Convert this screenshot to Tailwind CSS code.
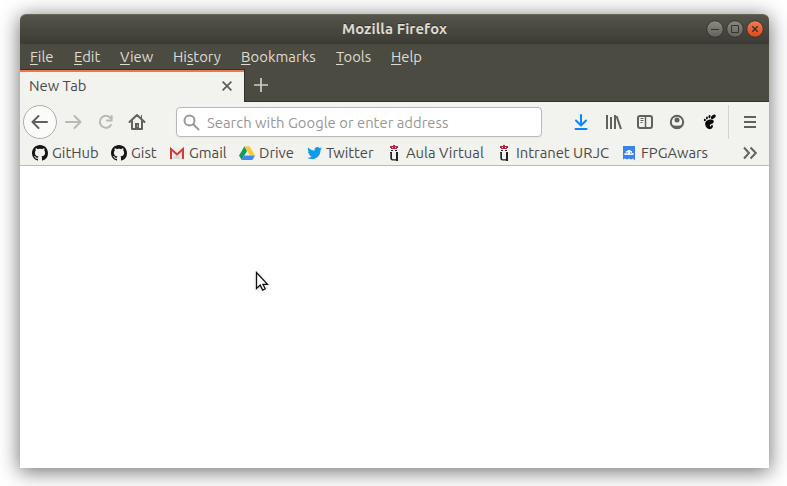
<!DOCTYPE html>
<html lang="en">
<head>
<meta charset="utf-8">
<title>Mozilla Firefox</title>
<script src="https://cdn.jsdelivr.net/npm/@tailwindcss/browser@4"></script>
</head>
<body class="w-[787px] h-[486px] overflow-hidden bg-white pt-[14px] pl-5 font-['Ubuntu','Noto_Sans',sans-serif] text-[14.8px] leading-5 text-[#4a4a4b]">
<svg class="hidden">
  <symbol id="github" viewBox="0 0 16 16"><path fill="#161514" d="M8 0C3.58 0 0 3.58 0 8c0 3.54 2.29 6.53 5.47 7.59.4.07.55-.17.55-.38 0-.19-.01-.82-.01-1.49-2.01.37-2.53-.49-2.69-.94-.09-.23-.48-.94-.82-1.13-.28-.15-.68-.52-.01-.53.63-.01 1.08.58 1.23.82.72 1.21 1.87.87 2.33.66.07-.52.28-.87.51-1.07-1.78-.2-3.64-.89-3.64-3.95 0-.87.31-1.59.82-2.15-.08-.2-.36-1.02.08-2.12 0 0 .67-.21 2.2.82.64-.18 1.32-.27 2-.27s1.36.09 2 .27c1.53-1.04 2.2-.82 2.2-.82.44 1.1.16 1.92.08 2.12.51.56.82 1.27.82 2.15 0 3.07-1.87 3.75-3.65 3.95.29.25.54.73.54 1.48 0 1.07-.01 1.93-.01 2.2 0 .21.15.46.55.38A8.01 8.01 0 0 0 16 8c0-4.42-3.58-8-8-8z"/></symbol>
  <symbol id="urjc" viewBox="0 0 16 16">
    <path fill="#bd2144" d="M7 0h2v1h3v2h-1v1H5V3H4V1h3z"/><path fill="#f1d5da" d="M6 2h1v1H6zM9 2h1v1H9z"/>
    <path fill="#252326" d="M5 5h2v1H5zM9 5h2v1H9zM4 7h2v6q0 1.300 1 1.300h3V7h2v9h-2v-.5H6.500Q4.300 15.500 4.300 13V8H4z"/>
  </symbol>
</svg>
<div class="w-[749px] h-[454px] bg-white rounded-t-[6px] shadow-[0_3px_20px_1px_rgba(0,0,0,0.55)] flex flex-col">
  <header class="relative h-[30px] shrink-0 rounded-t-[6px] border-t border-[#69675b] bg-linear-to-b from-[#56554b] to-[#3c3b35] flex items-center justify-center text-[#dfdbd2] font-bold">
    <span class="relative -top-px whitespace-nowrap tracking-[0.1px] [text-shadow:0_-1px_0_#32312b]">Mozilla Firefox</span>
    <svg class="absolute right-[4px] top-[4px]" width="60" height="20" viewBox="0 0 60 20" fill="none">
      <defs><linearGradient id="g" x2="0" y2="1"><stop stop-color="#8b8a82"/><stop offset="1" stop-color="#64635b"/></linearGradient><linearGradient id="r" x2="0" y2="1"><stop stop-color="#f37b57"/><stop offset="1" stop-color="#dd4818"/></linearGradient></defs>
      <g stroke="#34332e"><circle cx="10" cy="10" r="8.300" fill="url(#g)"/><circle cx="30" cy="10" r="8.300" fill="url(#g)"/><circle cx="50" cy="10" r="8.300" fill="url(#r)"/>
      <path d="M6 10.500h8M26.500 6.500h7v7h-7z"/><path stroke-width="1.400" d="m47.300 7.300 5.400 5.400m0-5.400-5.400 5.400"/></g>
    </svg>
  </header>
  <nav class="h-[25px] shrink-0 bg-[#4c4b42] pl-[10px] pt-[3px] flex gap-5 text-[#dfdbd2] whitespace-nowrap [&_u]:underline-offset-[2px] [&_u]:decoration-1">
    <span class="w-6"><u>F</u>ile</span><span class="w-[26px]"><u>E</u>dit</span><span class="w-[33px]"><u>V</u>iew</span><span class="w-12">Hi<u>s</u>tory</span><span class="w-[75px] tracking-[0.08px]"><u>B</u>ookmarks</span><span class="w-[35px]"><u>T</u>ools</span><span class="w-[31px]"><u>H</u>elp</span>
  </nav>
  <div class="h-[33px] shrink-0 bg-[#4c4b42] flex">
    <div class="w-[225px] border-t border-r border-[#32312b]">
      <div class="h-8 border-t-2 border-[#ef7847] bg-[#f2f2ee] flex items-center justify-between pl-[9px] pr-3">
        <span class="-mt-[2px]">New Tab</span>
        <svg class="-mt-[2px]" width="10" height="10" fill="none" stroke="#5b5b59" stroke-width="1.700"><path d="m.6.6 8.800 8.800m0-8.800L.6 9.400"/></svg>
      </div>
    </div>
    <div class="flex-1 border-b border-[#32312b] pl-[9px] pt-[9px]"><svg width="14" height="14" fill="none" stroke="#d0cdc4" stroke-width="1.700"><path d="M7 0v14M0 7h14"/></svg></div>
  </div>
  <div class="h-[40px] shrink-0 bg-[#f2f2ee] flex items-center">
    <svg width="140" height="40" viewBox="0 0 140 40" fill="none" stroke-width="2" stroke-linecap="round" stroke-linejoin="round">
      <circle cx="20" cy="20" r="16.500" fill="#fbfbfa" stroke="#adada9" stroke-width="1"/>
      <path stroke="#60605e" d="M13 20h14M18.500 14l-6 6 6 6"/>
      <path stroke="#b8b8b4" d="M46 20h14M54.500 14l6 6-6 6"/>
      <path stroke="#b8b8b4" d="M90.500 16a6 6 0 1 0 .5 7M91.700 14v4.500H87"/>
      <path stroke="#60605e" d="m109.500 20 7.500-7 7.500 7M112 19v8h10v-8"/><path fill="#60605e" d="M115 21h4v6h-4zM121 13v4l1 1v-5z" stroke="none"/><path fill="#f2f2ee" d="M117 23.500h1v1h-1z"/>
    </svg>
    <div class="ml-4 w-[366px] h-[30px] rounded-[4px] border border-[#b9b9b6] bg-white shadow-xs flex items-center pl-[6px] text-[#969696] whitespace-nowrap">
      <svg width="17" height="17" class="mr-[7px]" fill="none" stroke="#999998" stroke-width="2" stroke-linecap="round"><circle cx="6.500" cy="6.500" r="5"/><path d="m10.500 10.500 5 5"/></svg>
      <span class="mt-px tracking-[0.03px]">Search with Google or enter address</span>
    </div>
    <svg class="ml-[28px]" width="199" height="40" viewBox="550 0 199 40" fill="none" stroke="#60605e" stroke-width="2">
      <g stroke="#0a84ff" stroke-linecap="round" stroke-linejoin="round"><path d="M561 13v10M556 18.500l5 5 5-5M555.500 27h11"/></g>
      <path d="M587 13v14M591 15v12M595 13v14"/><path d="m596.500 14 4.500 13"/>
      <rect x="618" y="14" width="14" height="12" rx="2"/><path stroke-width="1.500" d="M625.500 14v12"/><path stroke-width="1" d="M620.500 16.500h3M620.500 18.500h3M620.500 20.500h2"/>
      <circle cx="657" cy="20" r="6.200"/><circle cx="657" cy="18" r="2.500" fill="#60605e" stroke="none"/><path stroke="none" fill="#60605e" d="M651.500 23q5.500 1.500 11 0-.5 4-5.500 4t-5.500-4z"/>
      <g transform="translate(103 0) scale(.85 1)" fill="#080808" stroke="none"><ellipse cx="694.500" cy="14.800" rx="3.200" ry="1.700" transform="rotate(-30 694.500 14.800)"/><ellipse cx="690" cy="14.600" rx="1.200" ry="1.600" transform="rotate(15 690 14.600)"/><ellipse cx="687" cy="16" rx="1.100" ry="1.400"/><ellipse cx="684.500" cy="18" rx="1.200" ry="1.200"/><path d="M692 17.500c-4 0-7.800 1.700-7 5.200.5 2.500 3 4.700 5.500 4.400 2.700-.2 3.700-2 3.400-3.700-.5-1.500-2-.5-2 .5 0 .8-1.500.8-1.500-.3.200-1.800 4.600-1.500 4.700-4 0-1.500-1.700-2.100-3.100-2.100z"/></g>
      <path stroke="#d2d2ce" stroke-width="1" d="M708.500 3v34"/>
      <path d="M724 15h12M724 20h12M724 25h12"/>
    </svg>
  </div>
  <div class="h-[24px] shrink-0 bg-[#f2f2ee] border-b border-[#bbbbb8] pl-3 pr-[11px] flex items-center gap-3 whitespace-nowrap [&>div]:flex [&>div]:items-center [&>div]:gap-1 [&_svg]:shrink-0 pb-[2px]">
    <div class="w-[67px]"><svg width="16" height="16"><use href="#github"/></svg><span>GitHub</span></div>
    <div class="w-[46px]"><svg width="16" height="16"><use href="#github"/></svg><span>Gist</span></div>
    <div class="w-[58px]"><svg width="16" height="16"><path fill="#ececec" d="M1 3h14v11H1z"/><path fill="#d9d9d9" d="m3 14 5-5 5 5z"/><path fill="none" stroke="#d43b2f" stroke-width="2" d="M2 14V4l6 5.500L14 4v10"/></svg><span>Gmail</span></div>
    <div class="w-[55px]"><svg width="16" height="16"><path fill="#159b5b" d="M5.500 1.300 0 10.500l2.700 4.500L8 6z"/><path fill="#f6cc36" d="M5.500 1.300h5L16 10.300h-5.300z"/><path fill="#4285f4" d="M5.300 10.500H16L13.300 15H2.700z"/></svg><span>Drive</span></div>
    <div class="w-[68px]"><svg width="16" height="16" viewBox="-2 -1 26 26"><path fill="#0c9bea" d="M23.950 4.570a10 10 0 0 1-2.820.770 4.960 4.960 0 0 0 2.160-2.720c-.95.550-2 .950-3.120 1.180a4.920 4.920 0 0 0-8.380 4.480C7.690 8.090 4.070 6.130 1.640 3.160a4.820 4.820 0 0 0-.67 2.480c0 1.700.87 3.210 2.190 4.100a4.900 4.900 0 0 1-2.230-.62v.06a4.920 4.920 0 0 0 3.950 4.830 5 5 0 0 1-2.210.080 4.940 4.940 0 0 0 4.600 3.420A9.870 9.870 0 0 1 0 19.540a13.990 13.990 0 0 0 7.550 2.210c9.050 0 14-7.500 14-13.980 0-.21 0-.42-.02-.63a9.940 9.940 0 0 0 2.460-2.550z"/></svg><span>Twitter</span></div>
    <div class="w-[98px]"><svg width="16" height="16"><use href="#urjc"/></svg><span>Aula Virtual</span></div>
    <div class="w-[113px]"><svg width="16" height="16"><use href="#urjc"/></svg><span>Intranet URJC</span></div>
    <div class="w-[88px]"><svg width="16" height="16"><path fill="#3b82f0" d="M2 1h12v14.500L12 13.500l-2 1-2-1-2 1-2-1-2 1z"/><path fill="#eef5ff" d="M3.500 10V8h1.500V6h1.500V5h3v1H11v2h1.500v2z"/><path fill="#3b82f0" d="M5.500 7.500h1.500v1H5.500zM9 7.500h1.500v1H9z"/></svg><span>FPGAwars</span></div>
    <svg class="ml-auto" width="15" height="14" fill="none" stroke="#646462" stroke-width="2"><path d="m1 1.500 5 5.500-5 5.500M7.500 1.500 12.800 7l-5.300 5.500"/></svg>
  </div>
  <main class="relative flex-1">
    <svg class="absolute left-[235px] top-[105px] drop-shadow-sm" width="16" height="22"><path fill="#fff" stroke="#111" stroke-width="1.300" d="M1.500 1.500v16l3.700-3.400 2.500 5 2.500-1.300-2.300-4.500h4.600z"/></svg>
  </main>
</div>
</body>
</html>
